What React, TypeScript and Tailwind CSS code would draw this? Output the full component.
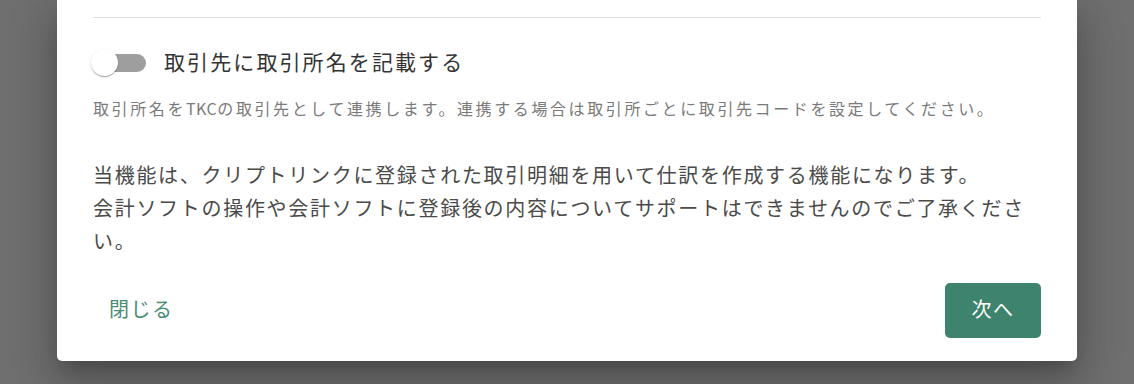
import React from "react";

const jp = { fontFamily: '"Noto Sans CJK JP", "Noto Sans", sans-serif' };

export default function App() {
  return (
    <div
      className="w-[1134px] h-[384px] overflow-hidden bg-[#6f6f6f] pl-[57px]"
      style={jp}
    >
      <div className="w-[1020px] bg-white rounded-b-[5px] shadow-[0_11px_15px_-7px_rgba(0,0,0,0.2),0_24px_38px_3px_rgba(0,0,0,0.14),0_9px_46px_8px_rgba(0,0,0,0.12)] px-[36px] pt-[17px] pb-[23px] flex flex-col">
        <div className="h-px bg-[#e0e0e0]" />
        <div className="mt-[30px] h-[30px] flex items-center">
          <div className="relative w-[54px] h-[30px] flex items-center">
            <div className="ml-[2px] w-[51px] h-[18px] rounded-full bg-[#9e9e9e]" />
            <div className="absolute left-[-2px] top-[1px] w-[27px] h-[27px] rounded-full bg-white shadow-[0_2px_1px_-1px_rgba(0,0,0,0.2),0_1px_1px_0_rgba(0,0,0,0.14),0_1px_3px_0_rgba(0,0,0,0.12)]" />
          </div>
          <span className="ml-[17px] text-[21px] tracking-[2.1px] text-[#333333] leading-[30px] pb-[4px]">
            取引先に取引所名を記載する
          </span>
        </div>
        <p className="mt-[18px] text-[16px] tracking-[2.6px] leading-[24px] text-[#7a7a7a]">
          取引所名を<span className="tracking-[0.5px]">TKC</span>の取引先として連携します。連携する場合は取引所ごとに取引先コードを設定してください。
        </p>
        <p className="mt-[38px] text-[20px] tracking-[1.7px] leading-[33px] text-[#4a4a4a]">
          当機能は、クリプトリンクに登録された取引明細を用いて仕訳を作成する機能になります。
          <br />
          会計ソフトの操作や会計ソフトに登録後の内容についてサポートはできませんのでご了承ください。
        </p>
        <div className="mt-[26px] flex items-center justify-between">
          <button className="h-[55px] px-[16px] pb-[4px] text-[20px] tracking-[1.5px] text-[#4a8c74] rounded-[4px]">
            閉じる
          </button>
          <button className="h-[55px] w-[96px] pb-[4px] text-[20px] tracking-[1.5px] text-white bg-[#3e836d] rounded-[5px]">
            次へ
          </button>
        </div>
      </div>
    </div>
  );
}
